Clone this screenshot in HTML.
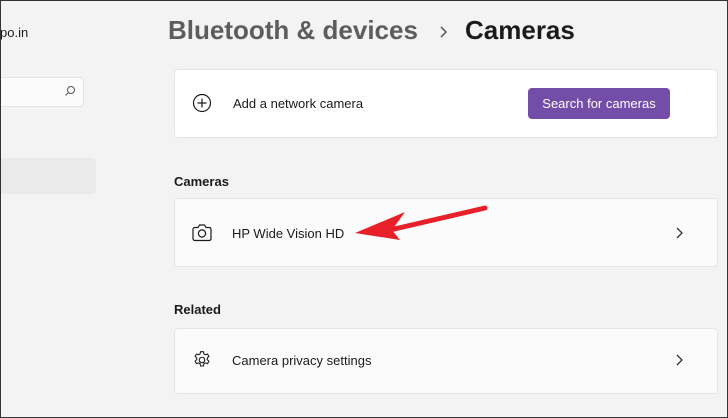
<!DOCTYPE html>
<html><head><style>
html,body{margin:0;padding:0}
body{width:728px;height:418px;background:#f3f3f3;font-family:"Liberation Sans",sans-serif;position:relative;overflow:hidden;color:#1b1b1b}
.frame{position:absolute;left:0;top:0;width:726px;height:416px;border:1px solid #333;pointer-events:none}
.abs{position:absolute}
.card{position:absolute;left:174px;width:544px;background:#fbfbfb;border:1px solid #e5e5e5;border-radius:4px;box-sizing:border-box}
.t{position:absolute;font-size:13px;color:#1b1b1b}
.h{position:absolute;font-size:13px;font-weight:bold;color:#1b1b1b;left:174px}
</style></head><body>
<div class="abs" style="left:0;top:25px;font-size:13px">po.in</div>
<div class="abs" style="left:-4px;top:77px;width:88px;height:30px;background:#fbfbfb;border:1px solid #e2e2e2;border-radius:4px;box-sizing:border-box"></div>
<svg class="abs" style="left:64px;top:85px" width="12" height="12" viewBox="0 0 12 12"><circle cx="7" cy="5" r="3.5" fill="none" stroke="#555" stroke-width="1"/><line x1="4.5" y1="7.5" x2="1.5" y2="10.5" stroke="#555" stroke-width="1"/></svg>
<div class="abs" style="left:-4px;top:158px;width:100px;height:36px;background:#eaeaea;border-radius:4px"></div>

<div class="abs" style="left:168px;top:15px;font-size:26px;font-weight:bold;color:#5d5d5d;white-space:nowrap">Bluetooth &amp; devices</div>
<svg class="abs" style="left:438px;top:25px" width="10" height="14" viewBox="0 0 10 14"><path d="M3 2l5 5-5 5" fill="none" stroke="#555" stroke-width="1.5"/></svg>
<div class="abs" style="left:465px;top:15px;font-size:26px;font-weight:bold;color:#1b1b1b">Cameras</div>

<div class="card" style="top:69px;height:69px;background:#fff"></div>
<svg class="abs" style="left:192px;top:93px" width="20" height="20" viewBox="0 0 20 20"><circle cx="10" cy="10" r="8.5" fill="none" stroke="#1b1b1b" stroke-width="1.2"/><path d="M10 5.5v9M5.5 10h9" stroke="#1b1b1b" stroke-width="1.2"/></svg>
<div class="t" style="left:233px;top:96px">Add a network camera</div>
<div class="abs" style="left:528px;top:88px;width:142px;height:31px;background:#744da9;border-radius:4px;color:#fff;font-size:13px;line-height:31px;text-align:center">Search for cameras</div>

<div class="h" style="top:174px">Cameras</div>
<div class="card" style="top:198px;height:69px"></div>
<svg class="abs" style="left:191px;top:223px" width="22" height="20" viewBox="0 0 22 20"><path d="M2 6.5q0-2 2-2h3l1.5-2.5h5l1.5 2.5h3q2 0 2 2v9q0 2-2 2H4q-2 0-2-2z" fill="none" stroke="#1b1b1b" stroke-width="1.2"/><circle cx="11" cy="10.5" r="3.6" fill="none" stroke="#1b1b1b" stroke-width="1.2"/></svg>
<div class="t" style="left:232px;top:226px">HP Wide Vision HD</div>
<svg class="abs" style="left:674px;top:226px" width="10" height="14" viewBox="0 0 10 14"><path d="M3 2l5 5-5 5" fill="none" stroke="#333" stroke-width="1.3"/></svg>
<svg class="abs" style="left:350px;top:200px" width="140" height="45" viewBox="0 0 140 45"><path d="M135 8L40 30" stroke="#e8202a" stroke-width="5" stroke-linecap="round"/><path d="M5 33L55 12L42 30L50 40Z" fill="#e8202a"/></svg>

<div class="h" style="top:302px">Related</div>
<div class="card" style="top:328px;height:66px"></div>
<svg class="abs" style="left:192px;top:350px" width="20" height="20" viewBox="0 0 24 24"><path d="M10.3 2h3.4l.6 2.7 1.7 1 2.6-.9 1.7 2.9-2 1.9v2l2 1.9-1.7 2.9-2.6-.9-1.7 1-.6 2.7h-3.4l-.6-2.7-1.7-1-2.6.9-1.7-2.9 2-1.9v-2l-2-1.9 1.7-2.9 2.6.9 1.7-1z" fill="none" stroke="#1b1b1b" stroke-width="1.3" stroke-linejoin="round"/><circle cx="12" cy="12" r="3.3" fill="none" stroke="#1b1b1b" stroke-width="1.3"/></svg>
<div class="t" style="left:232px;top:353px">Camera privacy settings</div>
<svg class="abs" style="left:674px;top:353px" width="10" height="14" viewBox="0 0 10 14"><path d="M3 2l5 5-5 5" fill="none" stroke="#333" stroke-width="1.3"/></svg>
<div class="frame"></div>
</body></html>
